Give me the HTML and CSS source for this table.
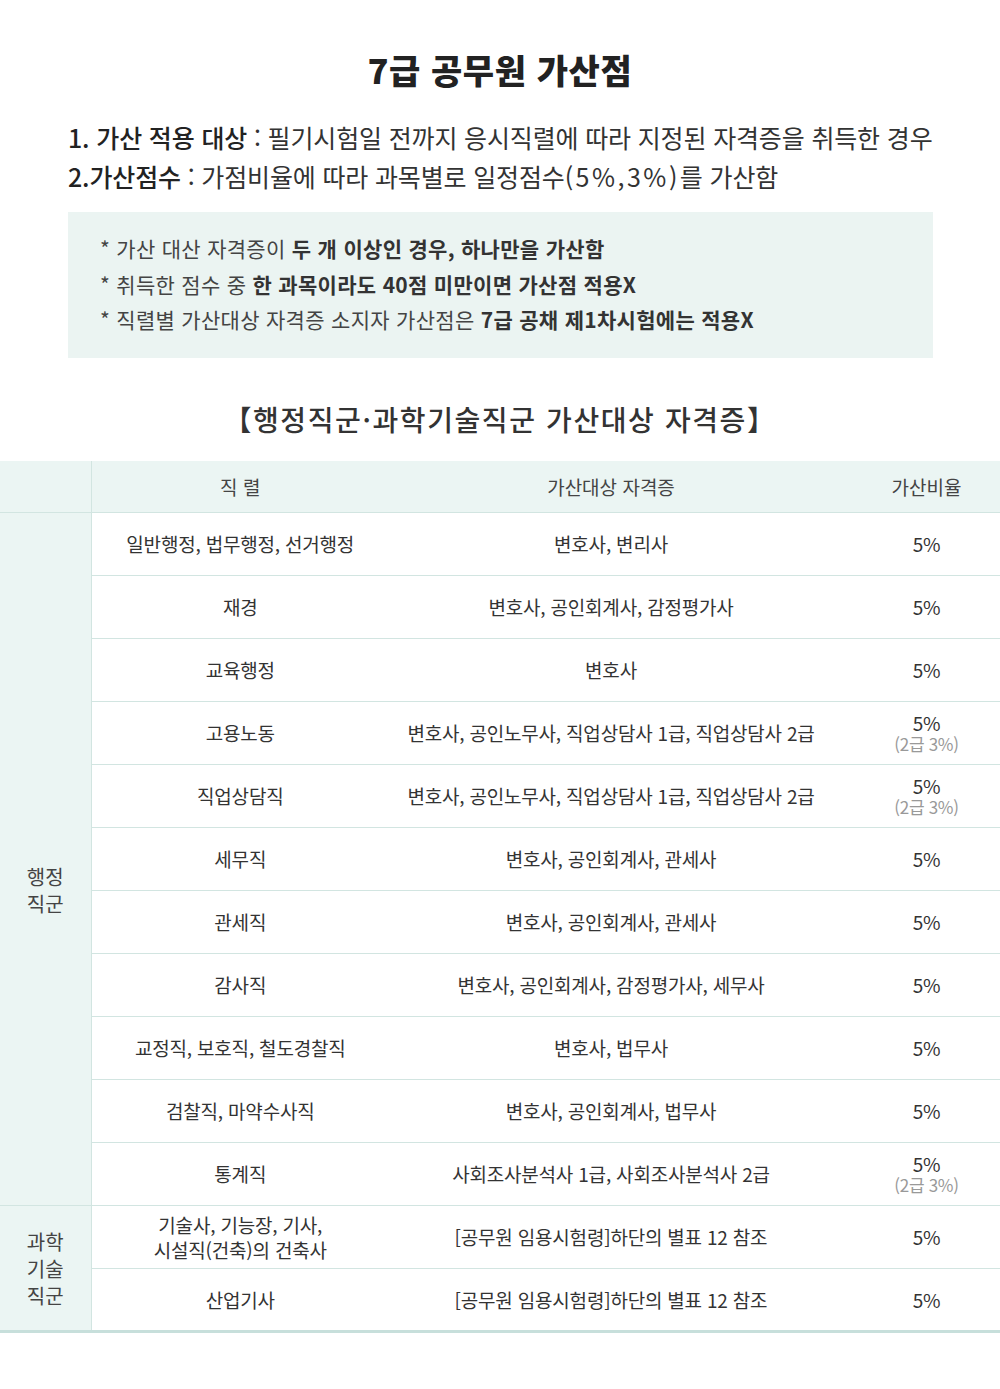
FILE: index.html
```html
<!DOCTYPE html>
<html lang="ko">
<head>
<meta charset="utf-8">
<link rel="stylesheet" href="styles.css">
</head>
<body>
<div class="page">
  <h1 class="title">7급 공무원 가산점</h1>
  <div class="intro">
    <p><b>1. 가산 적용 대상</b> : 필기시험일 전까지 응시직렬에 따라 지정된 자격증을 취득한 경우</p>
    <p><b>2.가산점수</b> : 가점비율에 따라 과목별로 일정점수<span class="num">(5%,3%)</span>를 가산함</p>
  </div>
  <div class="notes">
    <p>* 가산 대산 자격증이 <b>두 개 이상인 경우, 하나만을 가산함</b></p>
    <p>* 취득한 점수 중 <b>한 과목이라도 40점 미만이면 가산점 적용X</b></p>
    <p>* 직렬별 가산대상 자격증 소지자 가산점은 <b>7급 공채 제1차시험에는 적용X</b></p>
  </div>
  <h2 class="subtitle">【행정직군·과학기술직군 가산대상 자격증】</h2>
  <table class="tbl">
    <colgroup>
      <col class="c1"><col class="c2"><col class="c3"><col class="c4">
    </colgroup>
    <thead>
      <tr><th class="grp"></th><th>직 렬</th><th>가산대상 자격증</th><th class="rate">가산비율</th></tr>
    </thead>
    <tbody>
      <tr><td class="grp grp-admin" rowspan="11">행정<br>직군</td><td>일반행정, 법무행정, 선거행정</td><td>변호사, 변리사</td><td class="rate">5%</td></tr>
      <tr><td>재경</td><td>변호사, 공인회계사, 감정평가사</td><td class="rate">5%</td></tr>
      <tr><td>교육행정</td><td>변호사</td><td class="rate">5%</td></tr>
      <tr><td>고용노동</td><td>변호사, 공인노무사, 직업상담사 1급, 직업상담사 2급</td><td class="rate"><span class="main">5%</span><span class="sub">(2급 3%)</span></td></tr>
      <tr><td>직업상담직</td><td>변호사, 공인노무사, 직업상담사 1급, 직업상담사 2급</td><td class="rate"><span class="main">5%</span><span class="sub">(2급 3%)</span></td></tr>
      <tr><td>세무직</td><td>변호사, 공인회계사, 관세사</td><td class="rate">5%</td></tr>
      <tr><td>관세직</td><td>변호사, 공인회계사, 관세사</td><td class="rate">5%</td></tr>
      <tr><td>감사직</td><td>변호사, 공인회계사, 감정평가사, 세무사</td><td class="rate">5%</td></tr>
      <tr><td>교정직, 보호직, 철도경찰직</td><td>변호사, 법무사</td><td class="rate">5%</td></tr>
      <tr><td>검찰직, 마약수사직</td><td>변호사, 공인회계사, 법무사</td><td class="rate">5%</td></tr>
      <tr><td>통계직</td><td>사회조사분석사 1급, 사회조사분석사 2급</td><td class="rate"><span class="main">5%</span><span class="sub">(2급 3%)</span></td></tr>
      <tr><td class="grp grp-sci" rowspan="2">과학<br>기술<br>직군</td><td class="two">기술사, 기능장, 기사,<br>시설직(건축)의 건축사</td><td>[공무원 임용시험령]하단의 별표 12 참조</td><td class="rate">5%</td></tr>
      <tr class="last"><td>산업기사</td><td>[공무원 임용시험령]하단의 별표 12 참조</td><td class="rate">5%</td></tr>
    </tbody>
  </table>
</div>
</body>
</html>
```

FILE: styles.css
```css
* { box-sizing: border-box; }
html, body { margin: 0; padding: 0; background: #fff; }
body {
  font-family: "Noto Sans CJK KR", "Noto Sans", sans-serif;
  color: #333;
}
.page { width: 1000px; padding-top: 44px; }
.title {
  margin: 0;
  text-align: center;
  font-size: 34px;
  font-weight: 900;
  color: #222;
  line-height: 52px;
  letter-spacing: 0.6px;
}
.intro { margin: 22px 0 0 68px; }
.intro p {
  margin: 0;
  font-size: 25px;
  line-height: 39px;
  letter-spacing: -0.15px;
  color: #333;
}
.intro b { font-weight: 500; color: #222; }
.intro .num { letter-spacing: 2.5px; }
.notes {
  margin: 16px 67px 0 68px;
  background: #ebf4f2;
  padding: 19px 0 20px 32px;
}
.notes p {
  margin: 0;
  font-size: 21px;
  line-height: 35.5px;
  letter-spacing: 0.3px;
  color: #444;
}
.notes b { font-weight: 700; color: #333; }
.subtitle {
  margin: 38px 0 0;
  text-align: center;
  font-size: 28px;
  font-weight: 500;
  line-height: 46px;
  letter-spacing: 1.6px;
  color: #333;
}
.tbl {
  margin-top: 19px;
  width: 1000px;
  border-collapse: collapse;
  table-layout: fixed;
}
.c1 { width: 91px; }
.c2 { width: 298px; }
.c3 { width: 444px; }
.c4 { width: 167px; }
.tbl th {
  height: 52px;
  background: #ebf5f3;
  font-weight: 400;
  font-size: 19px;
  letter-spacing: 0;
  color: #444;
  border-bottom: 1px solid #d2e5e1;
  padding: 0;
}
.tbl th.grp { border-right: 1px solid #d2e5e1; }
.tbl td {
  height: 63px;
  text-align: center;
  font-size: 19px;
  letter-spacing: -0.2px;
  color: #333;
  border-bottom: 1px solid #d2e5e1;
  padding: 0;
  line-height: 22px;
}
.tbl td.grp {
  background: #ebf5f3;
  border-right: 1px solid #d2e5e1;
  color: #444;
  font-size: 20px;
  line-height: 27px;
  letter-spacing: 0;
}
.tbl td.grp-admin { padding-top: 62px; }
.tbl td.two { line-height: 25px; }
.tbl .rate { padding-left: 20px; }
.main { display: block; height: 22px; line-height: 22px; }
.sub {
  display: block;
  height: 20px;
  line-height: 20px;
  font-size: 17px;
  color: #999;
  letter-spacing: -0.3px;
}
.tbl tr.last td, .tbl td.grp-sci { border-bottom: 3px solid #c7dfdb; }
```
